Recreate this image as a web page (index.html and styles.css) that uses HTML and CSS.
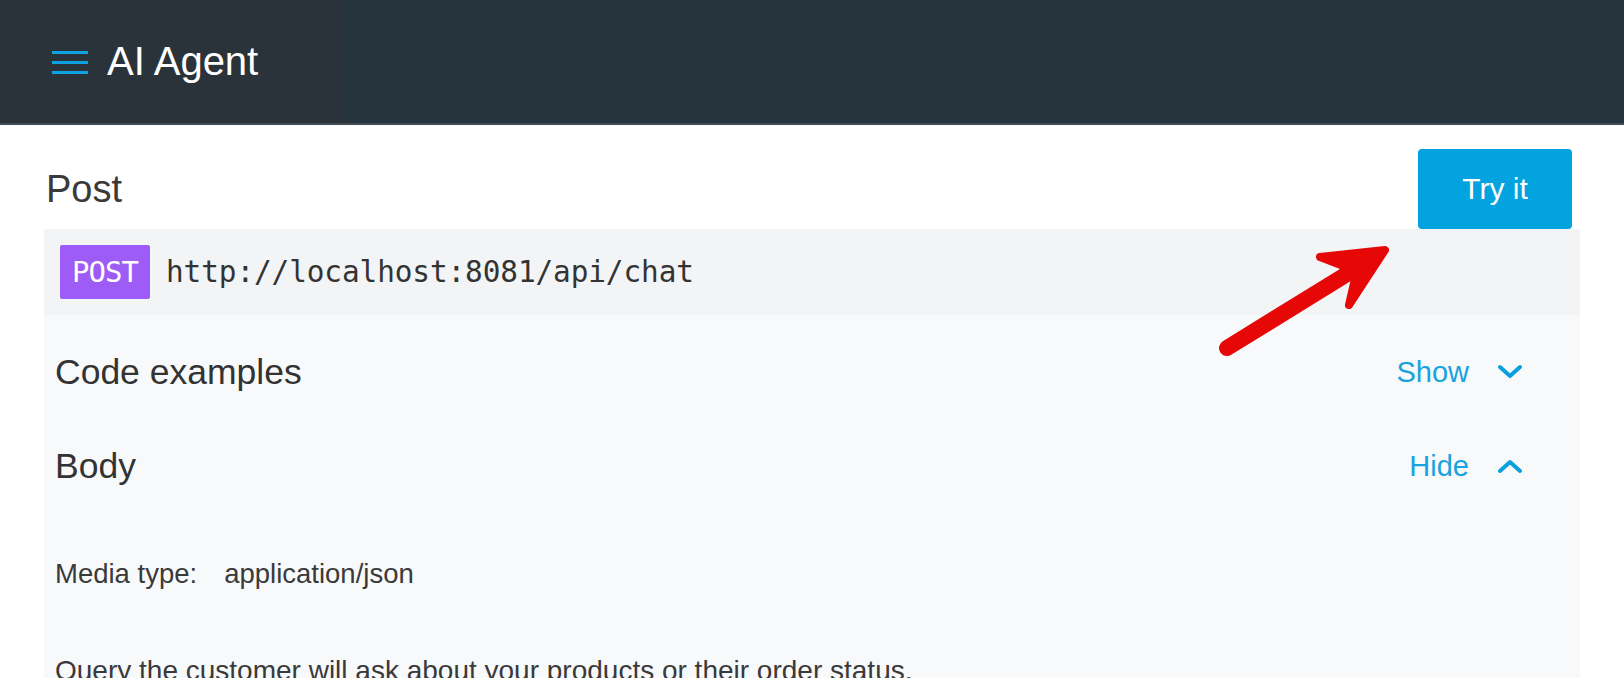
FILE: index.html
```html
<!DOCTYPE html>
<html lang="en">
<head>
<meta charset="utf-8">
<title>AI Agent</title>
<link rel="stylesheet" href="styles.css">
</head>
<body>
<header class="topbar">
  <div class="brand">
    <svg class="menu-icon" width="36" height="26" viewBox="0 0 36 26" aria-hidden="true">
      <rect x="0" y="1" width="36" height="3" fill="#0ea3e0"/>
      <rect x="0" y="11" width="36" height="3" fill="#0ea3e0"/>
      <rect x="0" y="21" width="36" height="3" fill="#0ea3e0"/>
    </svg>
    <span class="brand-title">AI Agent</span>
  </div>
</header>

<main class="content">
  <div class="title-row">
    <h1 class="page-title">Post</h1>
    <button class="try-btn">Try it</button>
  </div>

  <div class="url-bar">
    <span class="method">POST</span>
    <span class="url">http://localhost:8081/api/chat</span>
  </div>

  <section class="panel">
    <div class="panel-row">
      <h2 class="panel-heading">Code examples</h2>
      <span class="toggle">Show
        <svg class="chev" width="24" height="16" viewBox="0 0 24 16" aria-hidden="true"><polyline points="2,3 12,12 22,3" fill="none" stroke="#0aa0dc" stroke-width="4" stroke-linecap="round" stroke-linejoin="round"/></svg>
      </span>
    </div>
    <div class="panel-row">
      <h2 class="panel-heading">Body</h2>
      <span class="toggle">Hide
        <svg class="chev" width="24" height="16" viewBox="0 0 24 16" aria-hidden="true"><polyline points="2,13 12,4 22,13" fill="none" stroke="#0aa0dc" stroke-width="4" stroke-linecap="round" stroke-linejoin="round"/></svg>
      </span>
    </div>
    <div class="body-info">
      <p class="media"><span class="media-label">Media type:</span><span>application/json</span></p>
      <p class="desc">Query the customer will ask about your products or their order status.</p>
    </div>
  </section>
</main>

<svg class="annot-arrow" width="220" height="140" viewBox="0 0 220 140" aria-hidden="true">
  <line x1="27" y1="118" x2="160" y2="36" stroke="#e60707" stroke-width="16" stroke-linecap="round"/>
  <polygon points="185,20 120,27 146,37 155,49 149,75" fill="#e60707" stroke="#e60707" stroke-width="8" stroke-linejoin="round"/>
</svg>
</body>
</html>
```

FILE: styles.css
```css
html, body {
  margin: 0;
  padding: 0;
}

body {
  background: #ffffff;
  font-family: "Liberation Sans", Arial, sans-serif;
  color: #333333;
  position: relative;
  overflow: hidden;
  height: 678px;
}

.topbar {
  height: 123px;
  background: #26343e;
  border-bottom: 2px solid #3f4a53;
  display: flex;
}

.brand {
  width: 345px;
  background: #2a333a;
  display: flex;
  align-items: center;
  padding-left: 52px;
  box-sizing: border-box;
}

.menu-icon {
  display: block;
  margin-top: 2px;
}

.brand-title {
  margin-left: 19px;
  color: #ffffff;
  font-size: 40px;
  line-height: 1;
  margin-top: -2px;
}

.content {
  padding: 0 44px;
}

.title-row {
  display: flex;
  justify-content: space-between;
  align-items: center;
  padding: 24px 8px 0 2px;
}

.page-title {
  margin: 0;
  font-weight: normal;
  font-size: 38px;
  color: #3a3a3a;
}

.try-btn {
  width: 154px;
  height: 80px;
  border: none;
  border-radius: 4px;
  background: #03a3df;
  color: #ffffff;
  font-family: "Liberation Sans", Arial, sans-serif;
  font-size: 30px;
  padding: 0;
}

.url-bar {
  height: 86px;
  background: #f3f4f6;
  display: flex;
  align-items: center;
  padding-left: 16px;
}

.method {
  width: 90px;
  height: 54px;
  background: #9d5cf6;
  border-radius: 2px;
  color: #ffffff;
  font-family: "DejaVu Sans Mono", "Liberation Mono", monospace;
  font-size: 29px;
  display: flex;
  align-items: center;
  justify-content: center;
  letter-spacing: -1px;
}

.url {
  margin-left: 16px;
  font-family: "DejaVu Sans Mono", "Liberation Mono", monospace;
  font-size: 29.4px;
  color: #333333;
  letter-spacing: -0.1px;
}

.panel {
  background: #f8f9fb;
  padding: 10px 58px 40px 11px;
}

.panel-row {
  height: 94px;
  display: flex;
  justify-content: space-between;
  align-items: center;
}

.panel-heading {
  margin: 0;
  font-weight: normal;
  font-size: 35.5px;
  color: #333333;
}

.toggle {
  display: flex;
  align-items: center;
  gap: 29px;
  color: #18a2de;
  font-size: 29px;
}

.chev {
  display: block;
}

.body-info {
  padding-top: 45px;
}

.media {
  margin: 0;
  font-size: 27.5px;
  line-height: 31px;
  color: #3a3a3a;
}

.media-label {
  margin-right: 27px;
}

.desc {
  margin: 66px 0 0 0;
  font-size: 28px;
  line-height: 31px;
  color: #3a3a3a;
}

.annot-arrow {
  position: absolute;
  left: 1200px;
  top: 230px;
}
```
